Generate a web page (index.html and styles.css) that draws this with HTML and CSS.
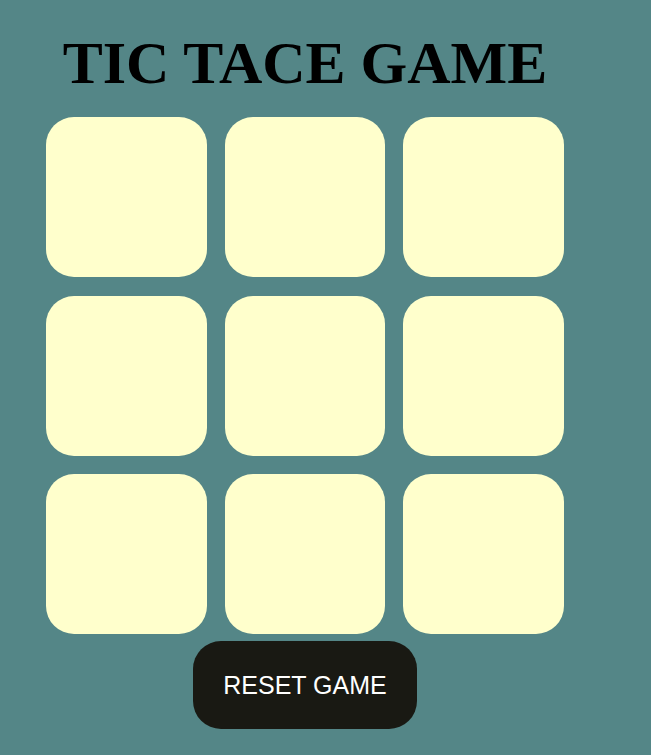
FILE: index.html
```html
<!DOCTYPE html>
<html lang="en">
<head>
<meta charset="utf-8">
<title>Tic Tac Toe</title>
<link rel="stylesheet" href="styles.css">
</head>
<body>
<main class="game">
  <h1 class="title">TIC TACE GAME</h1>
  <div class="board">
    <button class="cell"></button>
    <button class="cell"></button>
    <button class="cell"></button>
    <button class="cell"></button>
    <button class="cell"></button>
    <button class="cell"></button>
    <button class="cell"></button>
    <button class="cell"></button>
    <button class="cell"></button>
  </div>
  <button class="reset">RESET GAME</button>
</main>
</body>
</html>
```

FILE: styles.css
```css
html, body {
  margin: 0;
  padding: 0;
}
body {
  background: #548687;
  min-height: 755px;
}
.game {
  width: 610px;
  display: flex;
  flex-direction: column;
  align-items: center;
  padding-top: 32px;
}
.title {
  margin: 0 0 23px;
  font-family: "Liberation Serif", "Times New Roman", serif;
  font-weight: bold;
  font-size: 60px;
  line-height: 62px;
  color: #000;
}
.board {
  display: grid;
  grid-template-columns: repeat(3, 160.67px);
  grid-auto-rows: 160px;
  column-gap: 18px;
  row-gap: 18.5px;
}
.cell {
  border: none;
  padding: 0;
  margin: 0;
  background: #ffffcc;
  border-radius: 28px;
}
.reset {
  margin-top: 7px;
  width: 224px;
  height: 88px;
  border: none;
  border-radius: 28px;
  background: #191913;
  color: #fff;
  font-family: "Liberation Sans", Arial, sans-serif;
  font-size: 25px;
  padding: 0;
}
```
